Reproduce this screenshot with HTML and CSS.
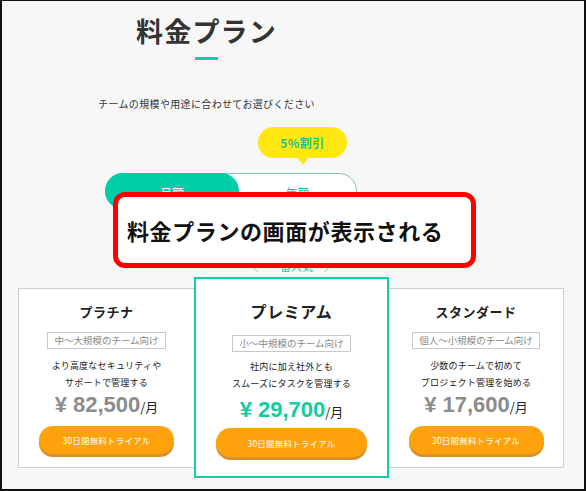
FILE: index.html
```html
<!DOCTYPE html>
<html lang="ja">
<head>
<meta charset="utf-8">
<title>料金プラン</title>
<link rel="stylesheet" href="styles.css">
</head>
<body>
<div class="frame">
  <div class="head">
    <h1 class="title">料金プラン</h1>
    <div class="bar"></div>
    <p class="lead">チームの規模や用途に合わせてお選びください</p>
  </div>

  <div class="switch-wrap">
    <div class="badge">5%割引</div>
    <div class="toggle">
      <div class="opt active">月額</div>
      <div class="opt year">年額</div>
    </div>
  </div>

  <div class="rec">＼　一番人気　／</div>

  <div class="plans">
    <div class="card side">
      <div class="name">プラチナ</div>
      <div class="tag">中〜大規模のチーム向け</div>
      <p class="desc">より高度なセキュリティや<br>サポートで管理する</p>
      <div class="price"><span class="num">¥ 82,500</span><span class="unit">/月</span></div>
      <div class="btn">30日間無料トライアル</div>
    </div>
    <div class="card main">
      <div class="name">プレミアム</div>
      <div class="tag">小〜中規模のチーム向け</div>
      <p class="desc">社内に加え社外とも<br>スムーズにタスクを管理する</p>
      <div class="price"><span class="num">¥ 29,700</span><span class="unit">/月</span></div>
      <div class="btn">30日間無料トライアル</div>
    </div>
    <div class="card side right">
      <div class="name">スタンダード</div>
      <div class="tag">個人〜小規模のチーム向け</div>
      <p class="desc">少数のチームで初めて<br>プロジェクト管理を始める</p>
      <div class="price"><span class="num">¥ 17,600</span><span class="unit">/月</span></div>
      <div class="btn">30日間無料トライアル</div>
    </div>
  </div>

  <div class="callout">料金プランの画面が表示される</div>
</div>
</body>
</html>
```

FILE: styles.css
```css
* { box-sizing: border-box; }

html, body {
  margin: 0;
  padding: 0;
  background: #f7f7f7;
}

body {
  font-family: "Noto Sans CJK JP", "Noto Sans", sans-serif;
  color: #333;
}

.frame {
  position: relative;
  width: 586px;
  height: 491px;
  overflow: hidden;
  background: #f7f7f7;
  border: 2px solid #111;
  border-top-width: 1px;
}

.head {
  width: 409px;
  padding-top: 12px;
  text-align: center;
}

.title {
  margin: 0;
  font-size: 27px;
  line-height: 36px;
  font-weight: 700;
  color: #333;
  letter-spacing: 1.2px;
}

.bar {
  width: 23px;
  height: 3px;
  margin: 8px auto 0;
  background: #10cfa6;
}

.lead {
  margin: 36px 0 0;
  font-size: 10px;
  line-height: 16px;
  letter-spacing: 0.35px;
  color: #333;
}

.switch-wrap {
  width: 252px;
  margin: 15px 0 0 103px;
}

.badge {
  position: relative;
  width: 89px;
  height: 31px;
  margin-left: 153px;
  border-radius: 16px;
  background: #ffe812;
  color: #13c49a;
  font-size: 12px;
  font-weight: 700;
  display: flex;
  align-items: center;
  justify-content: center;
  letter-spacing: 0.5px;
}

.badge::after {
  content: "";
  position: absolute;
  left: 50%;
  bottom: -7px;
  margin-left: -5px;
  border-left: 5px solid transparent;
  border-right: 5px solid transparent;
  border-top: 7px solid #ffe812;
}

.toggle {
  display: flex;
  height: 36px;
  margin-top: 15px;
  border: 1px solid #7cc7af;
  border-radius: 18px;
  background: #fff;
}

.opt {
  display: flex;
  align-items: center;
  justify-content: center;
  font-size: 12px;
  padding-top: 2px;
}

.opt.active {
  width: 134px;
  margin: -1px 0 -1px -1px;
  border-radius: 18px;
  background: #00cea6;
  color: #fff;
}

.opt.year {
  flex: 1;
  color: #10c79d;
}

.rec {
  width: 546px;
  margin: 49px 0 0 16px;
  text-align: center;
  font-size: 11px;
  line-height: 16px;
  color: #10c79d;
}

.plans {
  display: flex;
  align-items: center;
  margin: 3px 0 0 16px;
}

.card {
  background: #fff;
  text-align: center;
  display: flex;
  flex-direction: column;
  align-items: center;
}

.card.side {
  width: 177px;
  height: 180px;
  border: 1px solid #cfcfcf;
  padding-top: 14px;
}

.card.side.right {
  width: 176px;
  margin-left: -1px;
}

.card.main {
  position: relative;
  z-index: 1;
  width: 195px;
  height: 201px;
  margin-left: -1px;
  border: 2px solid #10cfa6;
  padding-top: 22px;
}

.name {
  font-size: 13px;
  line-height: 18px;
  font-weight: 700;
  color: #222;
  letter-spacing: 0.5px;
}

.main .name {
  font-size: 16px;
  line-height: 20px;
  letter-spacing: 0.6px;
}

.tag {
  margin-top: 11px;
  padding: 0 6px;
  border: 1px solid #c9c9c9;
  font-size: 9.5px;
  line-height: 15px;
  color: #888;
  letter-spacing: 0;
}

.main .tag {
  margin-top: 14px;
}

.desc {
  margin: 8px 0 0;
  font-size: 9px;
  line-height: 17px;
  color: #222;
  letter-spacing: 0.2px;
}

.main .desc {
  margin-top: 6px;
}

.price {
  margin-top: 2px;
  line-height: 24px;
  white-space: nowrap;
}

.main .price {
  margin-top: 5px;
  line-height: 26px;
}

.num {
  font-family: "Liberation Sans", Arial, sans-serif;
  font-weight: 700;
  font-size: 22px;
  color: #8c8c8c;
}

.main .num {
  color: #10cda0;
}

.unit {
  font-size: 13px;
  color: #222;
}

.btn {
  width: 135px;
  height: 28px;
  margin-top: 7px;
  border-radius: 14px;
  background: #ffa20b;
  box-shadow: 0 3px 0 #d8902a;
  color: #fff;
  font-size: 8.5px;
  display: flex;
  align-items: center;
  justify-content: center;
  letter-spacing: 0.2px;
}

.main .btn {
  width: 151px;
  height: 29px;
  margin-top: 3px;
  border-radius: 15px;
}

.callout {
  position: absolute;
  left: 111px;
  top: 191px;
  z-index: 5;
  width: 363px;
  height: 76px;
  border: 5px solid #ff0000;
  border-radius: 12px;
  background: #fff;
  padding-left: 9px;
  display: flex;
  align-items: center;
  font-size: 22px;
  font-weight: 700;
  color: #111;
  letter-spacing: 0.6px;
}
```
